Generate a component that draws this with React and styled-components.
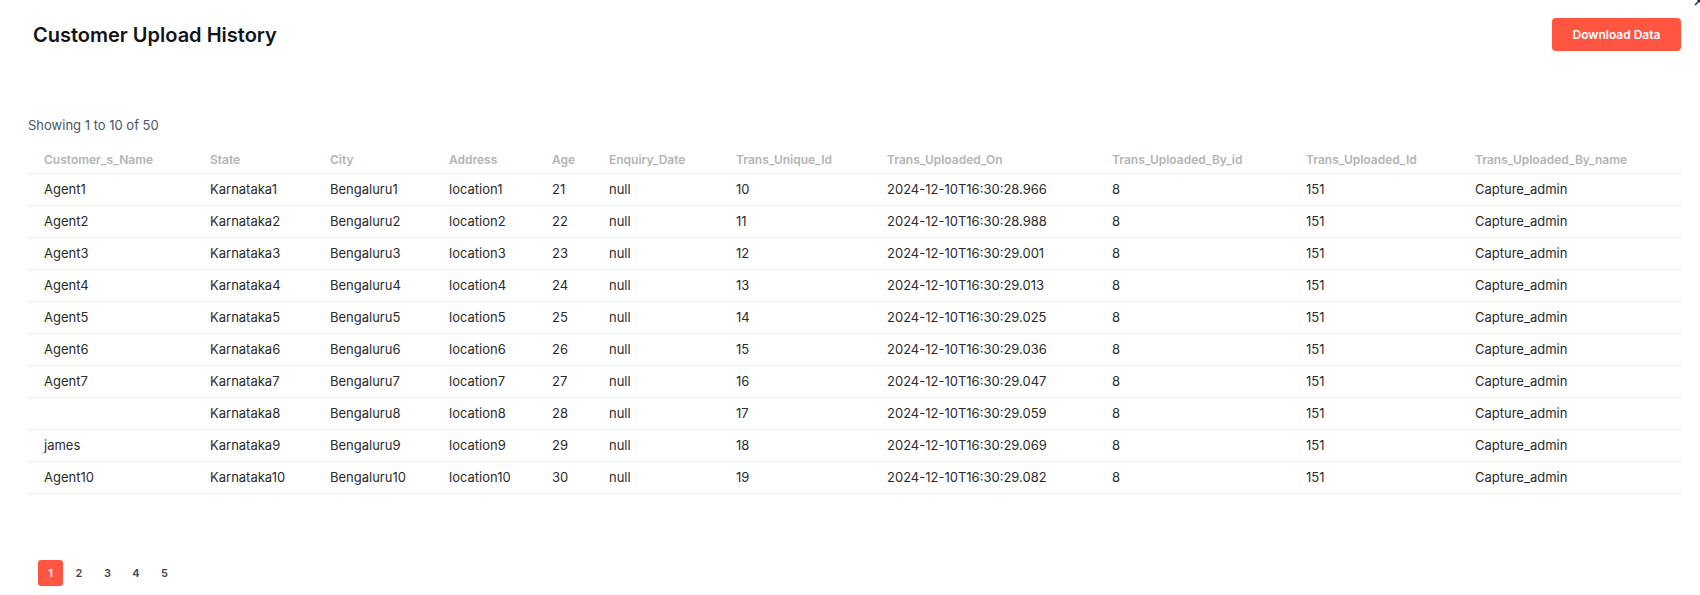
import React from "react";
import styled, { createGlobalStyle } from "styled-components";
import { X } from "lucide-react";

const GlobalStyle = createGlobalStyle`
  * { box-sizing: border-box; }
  html, body { margin: 0; padding: 0; background: #ffffff; }
  body { font-family: Inter, "Noto Sans", "Liberation Sans", sans-serif; color: #2b2b2b; }
`;

const Page = styled.div`
  position: relative;
  width: 1700px;
  height: 595px;
  padding: 18px 19px 0 28px;
  overflow: hidden;
`;

const CloseButton = styled.button`
  position: absolute;
  top: -6px;
  right: -6px;
  border: none;
  background: transparent;
  padding: 0;
  color: #1f2a3a;
  display: flex;
`;

const TopBar = styled.div`
  display: flex;
  align-items: center;
  justify-content: space-between;
  height: 33px;
`;

const Title = styled.h1`
  margin: 0 0 0 5px;
  font-size: 20px;
  font-weight: 600;
  color: #111418;
`;

const PrimaryButton = styled.button`
  width: 129px;
  height: 33px;
  border: none;
  border-radius: 4px;
  background: #ff5541;
  color: #ffffff;
  font-family: inherit;
  font-size: 12px;
  font-weight: 600;
  cursor: pointer;
`;

const Summary = styled.div`
  margin-top: 64px;
  line-height: 20px;
  font-size: 13px;
  color: #4b5563;
`;

const Table = styled.table`
  margin-top: 12px;
  width: 100%;
  border-collapse: collapse;
  table-layout: fixed;
`;

const HeadCell = styled.th`
  height: 26px;
  padding: 0 0 0 16px;
  text-align: left;
  font-size: 12px;
  font-weight: 600;
  color: #b4b4b4;
  border-bottom: 1px solid #ececec;
  white-space: nowrap;
`;

const Cell = styled.td`
  height: 32px;
  padding: 0 0 0 16px;
  font-size: 13px;
  color: #2b2b2b;
  border-bottom: 1px solid #ececec;
  white-space: nowrap;
`;

const Pager = styled.div`
  display: flex;
  gap: 3.5px;
  margin-top: 66px;
  margin-left: 10px;
`;

const PageButton = styled.button`
  width: 25px;
  height: 26px;
  border: none;
  border-radius: 3px;
  padding: 0;
  font-family: inherit;
  font-size: 11px;
  font-weight: 600;
  background: ${(p) => (p.$active ? "#ff5541" : "transparent")};
  color: ${(p) => (p.$active ? "#ffffff" : "#3f4654")};
  cursor: pointer;
`;

const columns = [
  ["Customer_s_Name", 166],
  ["State", 120],
  ["City", 119],
  ["Address", 103],
  ["Age", 57],
  ["Enquiry_Date", 127],
  ["Trans_Unique_Id", 151],
  ["Trans_Uploaded_On", 225],
  ["Trans_Uploaded_By_id", 194],
  ["Trans_Uploaded_Id", 169],
  ["Trans_Uploaded_By_name", 222],
];

const times = [
  "28.966",
  "28.988",
  "29.001",
  "29.013",
  "29.025",
  "29.036",
  "29.047",
  "29.059",
  "29.069",
  "29.082",
];

const names = {
  8: "",
  9: "james",
};

const rows = times.map((t, i) => {
  const n = i + 1;
  return [
    names[n] !== undefined ? names[n] : `Agent${n}`,
    `Karnataka${n}`,
    `Bengaluru${n}`,
    `location${n}`,
    String(20 + n),
    "null",
    String(9 + n),
    `2024-12-10T16:30:${t}`,
    "8",
    "151",
    "Capture_admin",
  ];
});

export default function App() {
  return (
    <>
      <GlobalStyle />
      <Page>
        <CloseButton aria-label="Close">
          <X size={14} strokeWidth={2.5} />
        </CloseButton>
        <TopBar>
          <Title>Customer Upload History</Title>
          <PrimaryButton>Download Data</PrimaryButton>
        </TopBar>
        <Summary>Showing 1 to 10 of 50</Summary>
        <Table>
          <colgroup>
            {columns.map(([name, w]) => (
              <col key={name} style={{ width: w }} />
            ))}
          </colgroup>
          <thead>
            <tr>
              {columns.map(([name]) => (
                <HeadCell key={name}>{name}</HeadCell>
              ))}
            </tr>
          </thead>
          <tbody>
            {rows.map((r, i) => (
              <tr key={i}>
                {r.map((v, j) => (
                  <Cell key={j}>{v}</Cell>
                ))}
              </tr>
            ))}
          </tbody>
        </Table>
        <Pager>
          {[1, 2, 3, 4, 5].map((p) => (
            <PageButton key={p} $active={p === 1}>
              {p}
            </PageButton>
          ))}
        </Pager>
      </Page>
    </>
  );
}
